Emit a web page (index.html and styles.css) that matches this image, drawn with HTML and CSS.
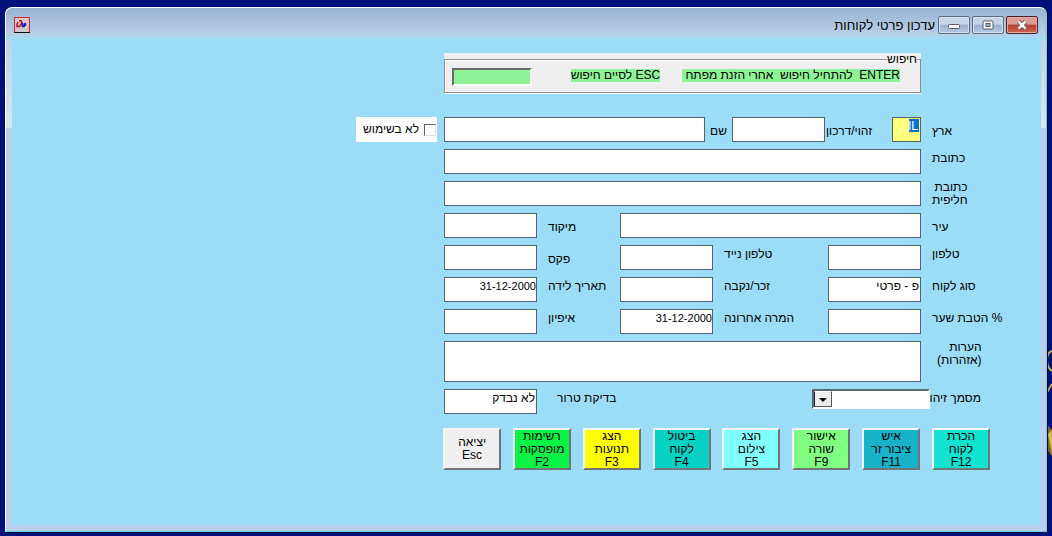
FILE: index.html
```html
<!DOCTYPE html>
<html lang="he" dir="rtl">
<head>
<meta charset="utf-8">
<title>עדכון פרטי לקוחות</title>
<link rel="stylesheet" href="styles.css">
</head>
<body>
<svg class="wallpaper" viewBox="0 0 6 120" aria-hidden="true">
  <g fill="none" stroke="#c9a94e" stroke-width="2">
    <path d="M6 5C3 6 1 9 1 14s2 9 5 11"/>
    <path d="M6 38C4 41 2 45 0 48"/>
  </g>
  <path d="M0 78C3 80 4 82 6 84V110C3 108 2 104 0 100Z" fill="#8a6226"/>
  <path d="M2 88L6 84V108Z" fill="#d9b25c"/>
</svg>
<main class="window">
  <header class="titlebar">
    <div class="controls">
      <button class="ctl close" aria-label="סגור"><svg width="14" height="10" viewBox="0 0 14 10"><path d="M3.500 1.500L10.500 8.500M10.500 1.500L3.500 8.500" stroke="#5b3a44" stroke-width="4.500"/><path d="M3.500 1.500L10.500 8.500M10.500 1.500L3.500 8.500" stroke="#fff" stroke-width="2.700"/></svg></button>
      <button class="ctl" aria-label="הגדל"><svg width="14" height="10" viewBox="0 0 14 10"><rect x="2" y="1" width="10" height="8" rx="1" fill="#fff" stroke="#555c6c"/><rect x="5" y="3.500" width="4" height="3" fill="#9db4cf" stroke="#555c6c"/></svg></button>
      <button class="ctl" aria-label="מזער"><svg width="14" height="10" viewBox="0 0 14 10"><rect x="1.500" y="4.500" width="11" height="4" rx="1" fill="#fff" stroke="#555c6c"/></svg></button>
    </div>
    <h1 class="title">עדכון פרטי לקוחות</h1>
    <svg class="appicon" width="16" height="16" viewBox="0 0 16 16" aria-hidden="true"><rect x=".5" y=".5" width="15" height="15" fill="#cfc9cc" stroke="#d9232e"/><path d="M0 15.500H16" stroke="#111"/><path d="M5 3.800H8M4 5L3 7.500V9.500H5.500L7 7.500L8 4.500V8" fill="none" stroke="#c8102e" stroke-width="1.500"/><path d="M8.500 6V9.300H10L11.300 6V9" fill="none" stroke="#1515c8" stroke-width="1.700"/></svg>
  </header>
  <div class="client">
    <form class="form">
      <fieldset class="search">
        <legend>חיפוש</legend>
        <div class="search-row">
          <label class="hint wide" for="key">ENTER&nbsp; להתחיל חיפוש&nbsp; אחרי הזנת מפתח&nbsp;</label>
          <span class="hint">ESC לסיים חיפוש</span>
          <input class="key" id="key" type="text">
        </div>
      </fieldset>

      <div class="identity">
        <label class="lbl low" for="country">ארץ</label>
        <input class="field country" id="country" value="IL">
        <label class="lbl low tight" for="passport">זהוי/דרכון</label>
        <input class="field" id="passport">
        <label class="lbl low near" for="name">שם</label>
        <input class="field" id="name">
        <label class="unused"><input type="checkbox"> לא בשימוש</label>
      </div>

      <div class="details">
        <label class="lbl" for="address">כתובת</label>
        <input class="field span5" id="address">

        <label class="lbl top" for="address2">כתובת<br>חליפית</label>
        <input class="field span5" id="address2">

        <label class="lbl low" for="city">עיר</label>
        <input class="field span3" id="city">
        <label class="lbl low" for="zip">מיקוד</label>
        <input class="field" id="zip">

        <label class="lbl" for="phone">טלפון</label>
        <input class="field" id="phone">
        <label class="lbl" for="mobile">טלפון נייד</label>
        <input class="field" id="mobile">
        <label class="lbl low" for="fax">פקס</label>
        <input class="field" id="fax">

        <label class="lbl" for="kind">סוג לקוח</label>
        <input class="field" id="kind" value="פ - פרטי">
        <label class="lbl" for="sex">זכר/נקבה</label>
        <input class="field" id="sex">
        <label class="lbl" for="birth">תאריך לידה</label>
        <input class="field date" id="birth" value="31-12-2000">

        <label class="lbl" for="rate">% הטבת שער</label>
        <input class="field" id="rate">
        <label class="lbl" for="last">המרה אחרונה</label>
        <input class="field date" id="last" value="31-12-2000">
        <label class="lbl" for="trait">איפיון</label>
        <input class="field" id="trait">

        <label class="lbl top notes-label" for="notes">הערות<br>(אזהרות)</label>
        <textarea class="field notes span5" id="notes"></textarea>

        <label class="lbl document" for="doc">מסמך זיהוי</label>
        <div class="combo span3">
          <select id="doc"><option></option></select>
          <span class="drop" aria-hidden="true"></span>
        </div>
        <label class="lbl far" for="terror">בדיקת טרור</label>
        <input class="field" id="terror" value="לא נבדק">
      </div>

      <div class="actions">
        <button type="button" class="act recognize">הכרת
לקוח
F12</button>
        <button type="button" class="act foreign">איש
ציבור זר
F11</button>
        <button type="button" class="act approve">אישור
שורה
F9</button>
        <button type="button" class="act scan">הצג
צילום
F5</button>
        <button type="button" class="act cancel">ביטול
לקוח
F4</button>
        <button type="button" class="act moves">הצג
תנועות
F3</button>
        <button type="button" class="act lists">רשימות
מופסקות
F2</button>
        <button type="button" class="act">יציאה
Esc</button>
      </div>
    </form>
  </div>
</main>
</body>
</html>
```
FILE: styles.css
```css
* {
  box-sizing: border-box;
}

body {
  margin: 0;
  min-height: 100vh;
  display: flex;
  padding: 7px 5px 4px;
  background: #00107a;
  font: 12px/13px "Liberation Sans", Arial, sans-serif;
  color: #000;
}

input, select, textarea, button {
  font: inherit;
  color: inherit;
  margin: 0;
}

.wallpaper {
  position: absolute;
  right: 0;
  top: 346px;
  width: 6px;
  height: 120px;
}

.window {
  position: relative;
  flex: 1;
  display: flex;
  flex-direction: column;
  padding: 0 5px 6px 6px;
  border: 1px solid #fff;
  border-right-color: #5fd0f0;
  border-bottom-color: #5fd0f0;
  border-radius: 7px 7px 0 0;
  background:
    linear-gradient(#9ab3d0, #b9cfe8 26px, #9fdcf5 31px, transparent 31px),
    linear-gradient(#b3cbe8, #dbe6f5) no-repeat 0 0 / 100% 120px,
    #b9cfec;
  box-shadow: 0 1px #000a30, 1px 0 #000a30;
}

.titlebar {
  display: flex;
  align-items: flex-start;
  height: 30px;
  padding: 8px 3px 0 2px;
}

.controls {
  display: flex;
  gap: 2px;
}

.ctl {
  display: flex;
  align-items: center;
  justify-content: center;
  width: 32px;
  height: 18px;
  padding: 0;
  border: 1px solid #5d6b80;
  border-radius: 2px;
  background: linear-gradient(#c6d5e7 45%, #9cb3cf 50%, #b4c9e0);
  box-shadow: inset 0 0 0 1px #d5e1ef;
}

.ctl svg {
  flex: none;
}

.ctl.close {
  border-color: #4b1f28;
  background: linear-gradient(#dd9c93 45%, #b83a2a 50%, #cd6a52);
  box-shadow: inset 0 0 0 1px #e3aaa2;
}

.title {
  margin: 2px 3px 0;
  font: 13px/16px "Liberation Sans", Arial, sans-serif;
}

.appicon {
  margin: 1px auto 0 0;
}

.client {
  flex: 1;
  background: #9bddf6;
  padding: 15px 10px 0 0;
}

.form {
  width: 675px;
}

.search {
  position: relative;
  width: 477px;
  height: 41px;
  margin: 0 110px 23px 0;
  padding: 0;
  border: 0;
  background: #efefef;
}

.search::before {
  content: "";
  position: absolute;
  inset: 6px 0 1px;
  border: 1px solid #8e8e8e;
  box-shadow: inset 1px 1px #fff, 0 1px #fff;
}

.search legend {
  position: relative;
  float: right;
  margin-right: 4px;
  padding: 0;
  background: #efefef;
}

.search-row {
  position: relative;
  clear: both;
  display: flex;
  align-items: flex-start;
  padding: 2px 21px 0 8px;
}

.hint {
  margin-top: 1px;
  background: #8ef396;
  white-space: nowrap;
}

.hint.wide {
  margin-left: 22px;
}

.key {
  width: 80px;
  height: 18px;
  margin-right: auto;
  background: #8ef396;
  border: 2px solid;
  border-color: #6b6b6b #fff #fff #6b6b6b;
}

.identity {
  display: grid;
  grid-template-columns: 110px 29px 67px 93px 27px 261px 81px;
  width: 675px;
  margin-bottom: 7px;
}

.details {
  display: grid;
  grid-template-columns: 110px 93px 115px 93px 83px 93px;
  row-gap: 7px;
  width: 587px;
}

.lbl {
  justify-self: end;
  align-self: start;
  margin-left: 11px;
  padding-top: 3px;
  white-space: nowrap;
}

.lbl.low { padding-top: 8px; }
.lbl.top { padding-top: 0; margin-bottom: -1px; }
.lbl.tight { margin-left: 1px; }
.lbl.near { margin-left: 5px; }
.lbl.far { margin-left: 20px; }
.lbl.notes-label { margin-left: 16px; }

.lbl.document {
  justify-self: start;
  margin: 0 50px 0 0;
}

.field {
  width: 100%;
  height: 25px;
  padding: 1px 1px 8px;
  border: 1px solid #55656e;
  border-radius: 0;
  background: #fff;
}

.span5 { grid-column: span 5; }
.span3 { grid-column: span 3; }

.field.date {
  padding-right: 0;
  font-size: 11px;
  direction: ltr;
  text-align: right;
}

.field.country {
  padding-right: 2px;
  background: linear-gradient(#0b6fc4, #0b6fc4) no-repeat right 1px top 1px / 10px 13px #ffff80;
  color: #fff;
  direction: ltr;
  text-align: right;
}

.field.notes {
  display: block;
  height: 41px;
  resize: none;
}

.unused {
  display: flex;
  align-items: center;
  gap: 5px;
  margin-right: 7px;
  width: 81px;
  height: 25px;
  padding-right: 1px;
  background: #fff;
  white-space: nowrap;
}

.unused input {
  appearance: none;
  flex: none;
  width: 12px;
  height: 12px;
  border: 1px solid;
  border-color: #606060 #e3dcdc #e3dcdc #606060;
}

.combo {
  position: relative;
  width: 118px;
  height: 20px;
  margin-right: -9px;
}

.combo select {
  appearance: none;
  display: block;
  width: 100%;
  height: 100%;
  border: 2px solid;
  border-color: #5a6670 #fff #fff #5a6670;
  border-radius: 0;
  background: #fff;
}

.drop {
  position: absolute;
  left: 2px;
  top: 2px;
  width: 18px;
  height: 16px;
  border: 1px solid;
  border-color: #fff #555 #555 #1a2a4a;
  background: #ececec;
  pointer-events: none;
}

.drop::after {
  content: "";
  position: absolute;
  left: 4px;
  top: 6px;
  border: 4px solid transparent;
  border-top-color: #000;
  border-bottom: 0;
}

.actions {
  display: flex;
  justify-content: space-between;
  width: 547px;
  margin: 14px 41px 0 0;
}

.act {
  width: 58px;
  height: 42px;
  padding: 0;
  border: 2px solid;
  border-color: #f4f4f4 #70757a #70757a #f4f4f4;
  border-radius: 0;
  background: #efefef;
  white-space: pre;
}

.recognize { background: #10e3d0; }
.foreign { background: #16b3c9; }
.approve { background: #80ff80; }
.scan { background: #80ffff; }
.cancel { background: #08d2c6; }
.moves { background: #ffff00; }
.lists { background: #08f545; }
```
